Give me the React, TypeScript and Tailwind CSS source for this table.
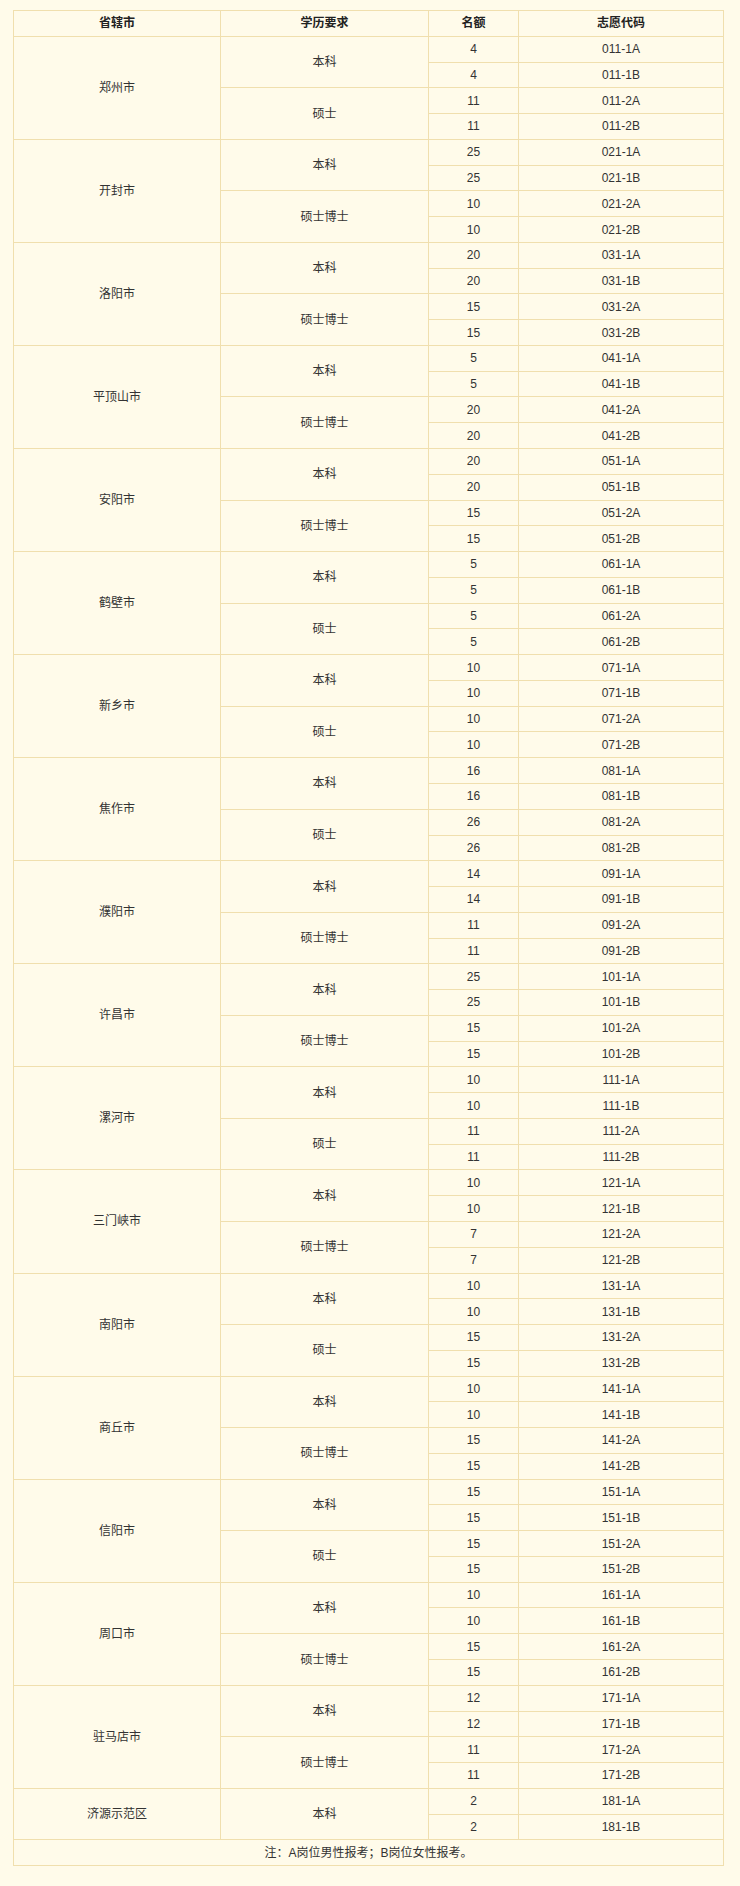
import React from 'react';

type City = {
  name: string;
  groups: { edu: string; rows: [string, string][] }[];
};

const mk = (
  name: string,
  code: string,
  e2: string,
  a: string,
  b: string
): City => ({
  name,
  groups: [
    { edu: '本科', rows: [[a, `${code}-1A`], [a, `${code}-1B`]] },
    { edu: e2, rows: [[b, `${code}-2A`], [b, `${code}-2B`]] },
  ],
});

const cities: City[] = [
  mk('郑州市', '011', '硕士', '4', '11'),
  mk('开封市', '021', '硕士博士', '25', '10'),
  mk('洛阳市', '031', '硕士博士', '20', '15'),
  mk('平顶山市', '041', '硕士博士', '5', '20'),
  mk('安阳市', '051', '硕士博士', '20', '15'),
  mk('鹤壁市', '061', '硕士', '5', '5'),
  mk('新乡市', '071', '硕士', '10', '10'),
  mk('焦作市', '081', '硕士', '16', '26'),
  mk('濮阳市', '091', '硕士博士', '14', '11'),
  mk('许昌市', '101', '硕士博士', '25', '15'),
  mk('漯河市', '111', '硕士', '10', '11'),
  mk('三门峡市', '121', '硕士博士', '10', '7'),
  mk('南阳市', '131', '硕士', '10', '15'),
  mk('商丘市', '141', '硕士博士', '10', '15'),
  mk('信阳市', '151', '硕士', '15', '15'),
  mk('周口市', '161', '硕士博士', '10', '15'),
  mk('驻马店市', '171', '硕士博士', '12', '11'),
  {
    name: '济源示范区',
    groups: [{ edu: '本科', rows: [['2', '181-1A'], ['2', '181-1B']] }],
  },
];

const cell = 'border border-[#f0dfae] text-center align-middle p-0';

export default function App() {
  return (
    <div
      className="w-[740px] h-[1886px] bg-[#fffbea] pt-[10px] pl-[13px]"
      style={{ fontFamily: '"Liberation Sans", "Noto Sans CJK SC", sans-serif' }}
    >
      <table className="w-[710px] border-collapse text-[12px] text-[#333333] table-fixed">
        <colgroup>
          <col className="w-[207px]" />
          <col className="w-[208px]" />
          <col className="w-[90px]" />
          <col className="w-[205px]" />
        </colgroup>
        <thead>
          <tr className="h-[25.78px]">
            <th className={`${cell} font-bold text-[#222222]`}>省辖市</th>
            <th className={`${cell} font-bold text-[#222222]`}>学历要求</th>
            <th className={`${cell} font-bold text-[#222222]`}>名额</th>
            <th className={`${cell} font-bold text-[#222222]`}>志愿代码</th>
          </tr>
        </thead>
        <tbody>
          {cities.map((c) => {
            const total = c.groups.reduce((s, g) => s + g.rows.length, 0);
            return c.groups.flatMap((g, gi) =>
              g.rows.map((r, ri) => (
                <tr key={`${c.name}-${gi}-${ri}`} className="h-[25.78px]">
                  {gi === 0 && ri === 0 && (
                    <td rowSpan={total} className={cell}>
                      {c.name}
                    </td>
                  )}
                  {ri === 0 && (
                    <td rowSpan={g.rows.length} className={cell}>
                      {g.edu}
                    </td>
                  )}
                  <td className={cell}>{r[0]}</td>
                  <td className={cell}>{r[1]}</td>
                </tr>
              ))
            );
          })}
          <tr className="h-[25.78px]">
            <td colSpan={4} className={cell}>
              注：A岗位男性报考；B岗位女性报考。
            </td>
          </tr>
        </tbody>
      </table>
    </div>
  );
}
